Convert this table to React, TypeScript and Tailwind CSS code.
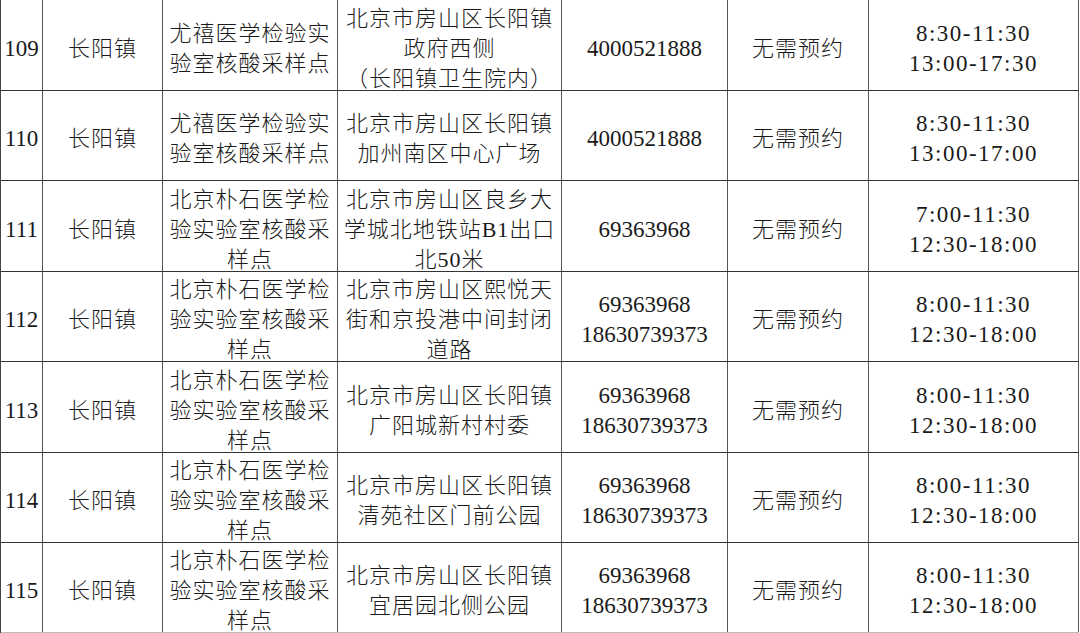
import React from 'react';

type Row = {
  no: string;
  town: string;
  site: string[];
  address: string[];
  phones: string[];
  booking: string;
  hours: string[];
  h: string;
};

const PUSHI = ['北京朴石医学检', '验实验室核酸采', '样点'];
const YOUXI = ['尤禧医学检验实', '验室核酸采样点'];

const rows: Row[] = [
  {
    no: '109',
    town: '长阳镇',
    site: YOUXI,
    address: ['北京市房山区长阳镇', '政府西侧', '（长阳镇卫生院内）'],
    phones: ['4000521888'],
    booking: '无需预约',
    hours: ['8:30-11:30', '13:00-17:30'],
    h: 'h-[91px]',
  },
  {
    no: '110',
    town: '长阳镇',
    site: YOUXI,
    address: ['北京市房山区长阳镇', '加州南区中心广场'],
    phones: ['4000521888'],
    booking: '无需预约',
    hours: ['8:30-11:30', '13:00-17:00'],
    h: 'h-[90px]',
  },
  {
    no: '111',
    town: '长阳镇',
    site: PUSHI,
    address: ['北京市房山区良乡大', '学城北地铁站B1出口', '北50米'],
    phones: ['69363968'],
    booking: '无需预约',
    hours: ['7:00-11:30', '12:30-18:00'],
    h: 'h-[91px]',
  },
  {
    no: '112',
    town: '长阳镇',
    site: PUSHI,
    address: ['北京市房山区熙悦天', '街和京投港中间封闭', '道路'],
    phones: ['69363968', '18630739373'],
    booking: '无需预约',
    hours: ['8:00-11:30', '12:30-18:00'],
    h: 'h-[90px]',
  },
  {
    no: '113',
    town: '长阳镇',
    site: PUSHI,
    address: ['北京市房山区长阳镇', '广阳城新村村委'],
    phones: ['69363968', '18630739373'],
    booking: '无需预约',
    hours: ['8:00-11:30', '12:30-18:00'],
    h: 'h-[91px]',
  },
  {
    no: '114',
    town: '长阳镇',
    site: PUSHI,
    address: ['北京市房山区长阳镇', '清苑社区门前公园'],
    phones: ['69363968', '18630739373'],
    booking: '无需预约',
    hours: ['8:00-11:30', '12:30-18:00'],
    h: 'h-[90px]',
  },
  {
    no: '115',
    town: '长阳镇',
    site: PUSHI,
    address: ['北京市房山区长阳镇', '宜居园北侧公园'],
    phones: ['69363968', '18630739373'],
    booking: '无需预约',
    hours: ['8:00-11:30', '12:30-18:00'],
    h: 'h-[90px]',
  },
];

function Cell({ className, lines }: { className: string; lines: string[] }) {
  return (
    <div
      className={`flex shrink-0 flex-col items-center justify-center border-r border-[#555] pt-[7px] text-center leading-[30px] ${className}`}
    >
      {lines.map((line, i) => (
        <div key={i} className="whitespace-nowrap">
          {line}
        </div>
      ))}
    </div>
  );
}

export default function App() {
  return (
    <div className="h-[633px] w-[1080px] overflow-hidden bg-white font-['Liberation_Serif','Noto_Sans_CJK_SC',serif] text-[22px] font-light text-[#1a1a1a]">
      <div className="w-[1079px] border-l border-[#444]">
        {rows.map((row, idx) => (
          <div
            key={row.no}
            className={`flex border-b ${idx === rows.length - 1 ? 'border-[#bbb]' : 'border-[#333]'} ${row.h}`}
          >
            <Cell className="w-[42px] text-[23px]" lines={[row.no]} />
            <Cell className="w-[120px] tracking-[1px]" lines={[row.town]} />
            <Cell className="w-[175px] tracking-[1px]" lines={row.site} />
            <Cell className="w-[224px] tracking-[1px]" lines={row.address} />
            <Cell className="w-[166px] text-[23px]" lines={row.phones} />
            <Cell className="w-[141px] tracking-[1px]" lines={[row.booking]} />
            <Cell className="w-[210px] text-[23px] tracking-[1.5px]" lines={row.hours} />
          </div>
        ))}
      </div>
    </div>
  );
}
